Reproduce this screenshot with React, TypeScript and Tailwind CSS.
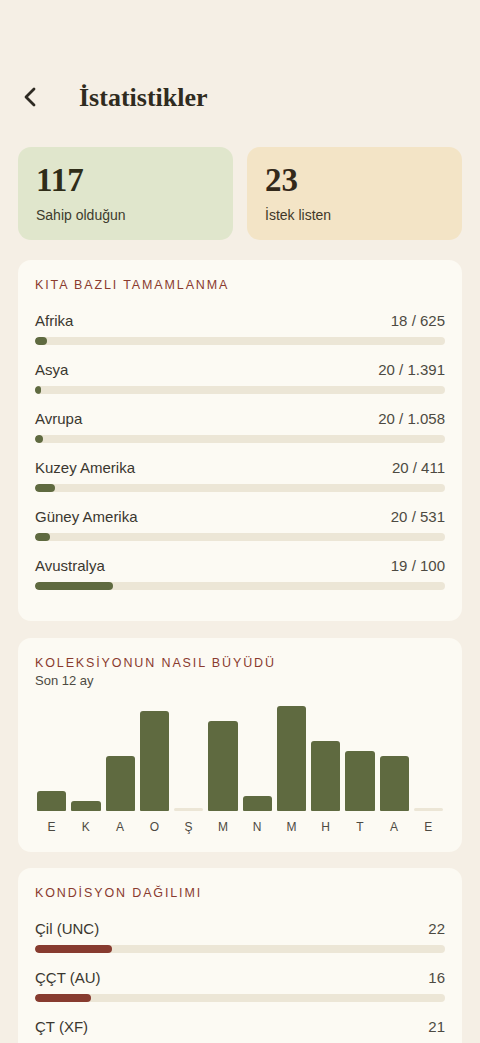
import { ChevronLeft } from 'lucide-react';

const sans = { fontFamily: '"Liberation Sans", Arial, sans-serif' };
const serif = { fontFamily: '"Liberation Serif", "Times New Roman", serif' };

const continents = [
  { name: 'Afrika', have: 18, total: 625, label: '18 / 625' },
  { name: 'Asya', have: 20, total: 1391, label: '20 / 1.391' },
  { name: 'Avrupa', have: 20, total: 1058, label: '20 / 1.058' },
  { name: 'Kuzey Amerika', have: 20, total: 411, label: '20 / 411' },
  { name: 'Güney Amerika', have: 20, total: 531, label: '20 / 531' },
  { name: 'Avustralya', have: 19, total: 100, label: '19 / 100' },
];

// monthly additions, last 12 months
const months = [
  { m: 'E', v: 4 },
  { m: 'K', v: 2 },
  { m: 'A', v: 11 },
  { m: 'O', v: 20 },
  { m: 'Ş', v: 0 },
  { m: 'M', v: 18 },
  { m: 'N', v: 3 },
  { m: 'M', v: 21 },
  { m: 'H', v: 14 },
  { m: 'T', v: 12 },
  { m: 'A', v: 11 },
  { m: 'E', v: 0 },
];

const conditions = [
  { name: 'Çil (UNC)', count: 22 },
  { name: 'ÇÇT (AU)', count: 16 },
  { name: 'ÇT (XF)', count: 21 },
];

function SectionTitle({ children }: { children: string }) {
  return (
    <div className="text-[12.5px] leading-4 tracking-[0.15em] text-[#8a3b2f]">{children}</div>
  );
}

function ProgressRow({ label, value, pct, color }: { label: string; value: string; pct: number; color: string }) {
  return (
    <div className="mt-[15px] first:mt-0">
      <div className="flex justify-between items-center h-5 text-[15px] text-[#3a372f]">
        <span>{label}</span>
        <span className="text-[#4d4a42]">{value}</span>
      </div>
      <div className="mt-[6px] h-2 rounded-full bg-[#ece6d6] overflow-hidden">
        <div className={`h-full rounded-full ${color}`} style={{ width: `${pct}%` }} />
      </div>
    </div>
  );
}

export default function App() {
  const totalCond = 117;
  return (
    <div className="min-h-[1043px] bg-[#f5efe5] px-[18px] pt-[81px] pb-6" style={sans}>
      {/* header */}
      <div className="flex items-center h-8">
        <ChevronLeft className="w-8 h-8 text-[#2d2a22] -ml-[4px]" strokeWidth={2.1} />
        <h1 className="ml-[33px] text-[26px] font-semibold text-[#2f2b20]" style={serif}>
          İstatistikler
        </h1>
      </div>

      {/* summary */}
      <div className="mt-[34px] grid grid-cols-2 gap-[14px]">
        <div className="h-[93px] rounded-[13px] bg-[#e0e6cc] px-[18px] pt-[15px]">
          <div className="text-[33px] leading-9 font-bold text-[#2f2d18]" style={serif}>117</div>
          <div className="mt-[7px] text-[14px] text-[#3d3b2c]">Sahip olduğun</div>
        </div>
        <div className="h-[93px] rounded-[13px] bg-[#f3e4c6] px-[18px] pt-[15px]">
          <div className="text-[33px] leading-9 font-bold text-[#33291a]" style={serif}>23</div>
          <div className="mt-[7px] text-[14px] text-[#3f3729]">İstek listen</div>
        </div>
      </div>

      {/* continents */}
      <div className="mt-[20px] rounded-[13px] bg-[#fcfaf3] px-[17px] pt-[17px] pb-[31px]">
        <SectionTitle>KITA BAZLI TAMAMLANMA</SectionTitle>
        <div className="mt-[18px]">
          {continents.map((c) => (
            <ProgressRow
              key={c.name}
              label={c.name}
              value={c.label}
              pct={(c.have / c.total) * 100}
              color="bg-[#5f6a40]"
            />
          ))}
        </div>
      </div>

      {/* growth chart */}
      <div className="mt-[17px] rounded-[13px] bg-[#fcfaf3] px-[17px] pt-[17px] pb-[17px]">
        <SectionTitle>KOLEKSİYONUN NASIL BÜYÜDÜ</SectionTitle>
        <div className="text-[13px] leading-4 text-[#4d4a42] mt-[2px]">Son 12 ay</div>
        <div className="mt-[10px] mx-[2px] h-[112px] grid grid-cols-12 gap-[5px] items-end">
          {months.map((d, i) =>
            d.v > 0 ? (
              <div
                key={i}
                className="bg-[#5f6a40] rounded-t-[3px] rounded-b-[1px]"
                style={{ height: `${d.v * 5}px` }}
              />
            ) : (
              <div key={i} className="h-[3px] rounded-full bg-[#ece6d6]" />
            ),
          )}
        </div>
        <div className="mt-[8px] mx-[2px] grid grid-cols-12 gap-[5px]">
          {months.map((d, i) => (
            <div key={i} className="text-center text-[12px] leading-4 text-[#4d4a42]">{d.m}</div>
          ))}
        </div>
      </div>

      {/* condition */}
      <div className="mt-[16px] rounded-[13px] bg-[#fcfaf3] px-[17px] pt-[17px] pb-[26px]">
        <SectionTitle>KONDİSYON DAĞILIMI</SectionTitle>
        <div className="mt-[18px]">
          {conditions.map((c) => (
            <ProgressRow
              key={c.name}
              label={c.name}
              value={String(c.count)}
              pct={(c.count / totalCond) * 100}
              color="bg-[#873b2f]"
            />
          ))}
        </div>
      </div>
    </div>
  );
}
